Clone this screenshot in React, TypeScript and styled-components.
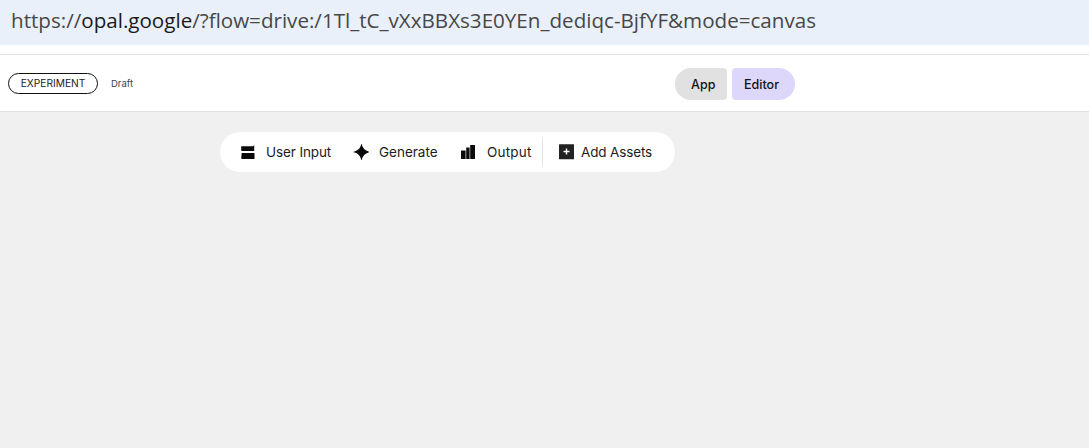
import React from "react";
import styled, { createGlobalStyle } from "styled-components";

const Global = createGlobalStyle`
  html, body { margin: 0; padding: 0; height: 100%; background: #f0f0f0; }
  #root { height: 100%; }
`;

const Page = styled.div`
  display: flex;
  flex-direction: column;
  width: 1089px;
  height: 448px;
  overflow: hidden;
  background: #f0f0f0;
`;

const UrlBar = styled.div`
  height: 45px;
  flex: none;
  box-sizing: border-box;
  padding: 0 0 5px 11px;
  display: flex;
  align-items: center;
  background: #e9f0fa;
  font-family: "Open Sans", sans-serif;
  font-size: 20.6px;
  color: #474747;
  white-space: pre;
`;

const UrlHost = styled.span`
  color: #1a1a1a;
`;

const Gap = styled.div`
  height: 9px;
  flex: none;
  background: #fff;
  border-bottom: 1px solid #e0e0e0;
`;

const Header = styled.header`
  height: 56px;
  flex: none;
  display: flex;
  align-items: center;
  padding-left: 8px;
  background: #fff;
  border-bottom: 1px solid #e0e0e0;
`;

const Badge = styled.span`
  box-sizing: border-box;
  width: 90px;
  height: 21px;
  display: flex;
  align-items: center;
  justify-content: center;
  border: 1px solid #111;
  border-radius: 11px;
  font-family: "Inter", sans-serif;
  font-size: 10.2px;
  color: #222;
`;

const Draft = styled.span`
  margin-left: 13px;
  font-family: "Inter", sans-serif;
  font-size: 9.5px;
  color: #444;
`;

const Tabs = styled.nav`
  margin: 2px 0 0 542px;
  display: flex;
  gap: 5px;
`;

const Tab = styled.div<{ $active?: boolean }>`
  height: 32px;
  box-sizing: border-box;
  width: ${(p) => (p.$active ? "63px" : "52px")};
  padding-left: ${(p) => (p.$active ? "12px" : "16px")};
  display: flex;
  align-items: center;
  background: ${(p) => (p.$active ? "#dcd7fb" : "#e1e1e1")};
  border-radius: ${(p) => (p.$active ? "4px 16px 16px 4px" : "16px 4px 4px 16px")};
  font-family: "Inter", sans-serif;
  font-size: 12.5px;
  font-weight: 500;
  color: #111;
`;

const Canvas = styled.main`
  flex: 1;
  padding: 20px 0 0 220px;
`;

const Toolbar = styled.div`
  box-sizing: border-box;
  width: 455px;
  height: 40px;
  display: flex;
  align-items: center;
  padding-left: 20px;
  border-radius: 20px;
  background: #fff;
`;

const ToolButton = styled.div<{ $track?: number; $width: number }>`
  display: flex;
  align-items: center;
  width: ${(p) => p.$width}px;
  flex: none;
  font-family: "Inter", sans-serif;
  font-size: 13.5px;
  letter-spacing: ${(p) => p.$track ?? 0}px;
  color: #1c1c1c;
  white-space: nowrap;
`;

const IconSlot = styled.svg<{ $gap?: number }>`
  width: 16px;
  height: 16px;
  flex: none;
  margin-right: ${(p) => p.$gap ?? 10}px;
  fill: #0a0a0a;
`;

const Divider = styled.div`
  width: 1px;
  height: 28px;
  flex: none;
  background: #e6e6e6;
  margin-right: 16px;
`;

export default function App() {
  return (
    <Page>
      <Global />
      <UrlBar>
        https://<UrlHost>opal.google</UrlHost>/?flow=drive:/1Tl_tC_vXxBBXs3E0YEn_dediqc-BjfYF&amp;mode=canvas
      </UrlBar>
      <Gap />
      <Header>
        <Badge>EXPERIMENT</Badge>
        <Draft>Draft</Draft>
        <Tabs>
          <Tab>App</Tab>
          <Tab $active>Editor</Tab>
        </Tabs>
      </Header>
      <Canvas>
        <Toolbar>
          <ToolButton $width={113} $track={-0.1}>
            <IconSlot viewBox="0 0 16 16">
              <path d="M1.2 2.2h12l1-1.2v6H1.7l-.5-.7zM1.7 9h12.5l.3.6V15H2l-.8-.8z" />
            </IconSlot>
            User Input
          </ToolButton>
          <ToolButton $width={107}>
            <IconSlot viewBox="0 0 16 16">
              <path d="M8.5 -.8C9.5 4.2 12 6.8 17.3 8c-5.3 1.2-7.8 3.8-8.8 8.8C7.5 11.8 5 9.2-.3 8 5 6.8 7.5 4.2 8.5-.8z" />
            </IconSlot>
            Generate
          </ToolButton>
          <ToolButton $width={82} $track={0.2}>
            <IconSlot viewBox="0 0 16 16" $gap={11}>
              <path d="M1 6.5h4.6V15H1zM6.2 3.5h3.4V15H6.2zM10.2 1H15v14h-4.8z" />
            </IconSlot>
            Output
          </ToolButton>
          <Divider />
          <ToolButton $width={100} $track={-0.15}>
            <IconSlot viewBox="0 0 16 16" $gap={6}>
              <path fill="#222" fillRule="evenodd" d="M0 .7A.5.5 0 0 1 .5.2h14a.5.5 0 0 1 .5.5v14a.5.5 0 0 1-.5.5H.5a.5.5 0 0 1-.5-.5zM6.8 4.5v2.3H4.5v1.4h2.3v2.3h1.4V8.2h2.3V6.8H8.2V4.5z" />
            </IconSlot>
            Add Assets
          </ToolButton>
        </Toolbar>
      </Canvas>
    </Page>
  );
}
